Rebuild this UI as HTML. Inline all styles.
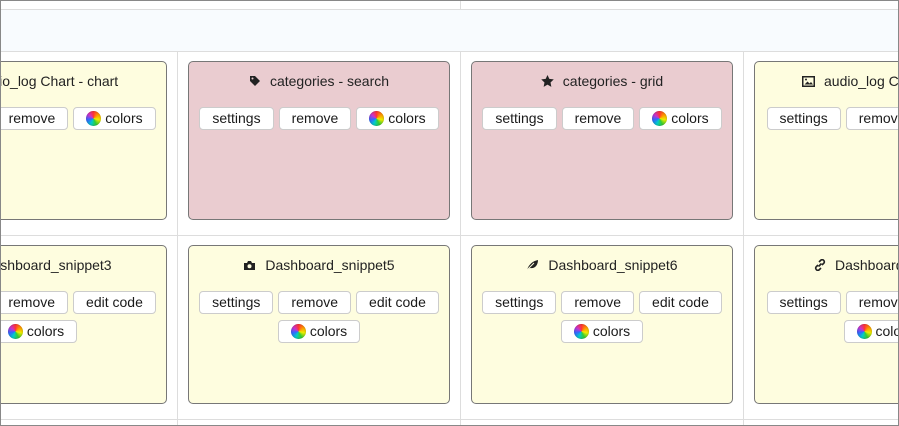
<!DOCTYPE html>
<html><head><style>
*{box-sizing:border-box;margin:0;padding:0}
html{overflow:hidden}
body{width:899px;height:426px;overflow:hidden;background:#fff;font-family:"Liberation Sans",Arial,sans-serif;font-size:14px;color:#222;position:relative}
.frame{position:absolute;left:0;top:0;width:899px;height:426px;border:1px solid #888;pointer-events:none;z-index:10}
.band{position:absolute;left:0;top:9px;width:899px;height:43px;background:#f8fbfe;border-top:1px solid #ddd;border-bottom:1px solid #ddd}
.vl{position:absolute;width:1px;background:#ddd}
.hl{position:absolute;height:1px;background:#ddd;left:0;width:899px}
.clip{position:absolute;left:0;top:0;width:899px;height:426px;overflow:hidden}
.card{position:absolute;width:262px;height:159px;border:1px solid #777;border-radius:5px;background:#fefddf}
.card.pink{background:#eaccd0}
.title{position:absolute;top:11px;left:0;right:0;text-align:center;font-size:14px;line-height:16px;white-space:nowrap}
.title svg{vertical-align:-1px;margin-right:9px}
.row{position:absolute;left:0;right:0;text-align:center;white-space:nowrap;font-size:0}
.b{display:inline-block;height:23px;line-height:21px;border:1px solid #ccc;border-radius:4px;background:#fff;font-size:14px;padding:0 12px;margin:0 2.5px;vertical-align:top;color:#1a1a1a}
.c{display:inline-block;width:15px;height:15px;border-radius:50%;background:conic-gradient(#f33,#f90,#ee0,#3c3,#0cc,#36f,#c3c,#f33);vertical-align:-3px;margin-right:4px;box-shadow:inset 0 0 2px rgba(0,0,0,.3)}
</style></head><body>
<div class="clip">
<div class="band"></div>
<div class="vl" style="left:460px;top:0;height:9px"></div>
<div class="vl" style="left:177px;top:52px;height:374px"></div>
<div class="vl" style="left:460px;top:52px;height:374px"></div>
<div class="vl" style="left:743px;top:52px;height:374px"></div>
<div class="hl" style="top:235px"></div>
<div class="hl" style="top:419px"></div>

<div class="card" style="left:-95px;top:61px">
<div class="title"><svg width="13" height="11" viewBox="0 0 13 11"><rect x=".75" y=".75" width="11.5" height="9.5" fill="none" stroke="#222" stroke-width="1.5"/></svg>audio_log Chart - chart</div>
<div class="row" style="top:45px"><span class="b">settings</span><span class="b">remove</span><span class="b"><i class="c"></i>colors</span></div>
</div>
<div class="card pink" style="left:188px;top:61px">
<div class="title"><svg width="12" height="12" viewBox="0 0 12 12"><path d="M1 1h5l5 5-5 5-5-5z" fill="#222"/><circle cx="3.5" cy="3.5" r="1" fill="#eaccd0"/></svg>categories - search</div>
<div class="row" style="top:45px"><span class="b">settings</span><span class="b">remove</span><span class="b"><i class="c"></i>colors</span></div>
</div>
<div class="card pink" style="left:471px;top:61px">
<div class="title"><svg width="13" height="12" viewBox="0 0 24 23"><path d="M12 0l3.5 7.5 8.5 1-6.2 5.8 1.6 8.4L12 18.5 4.6 22.7l1.6-8.4L0 8.5l8.5-1z" fill="#222"/></svg>categories - grid</div>
<div class="row" style="top:45px"><span class="b">settings</span><span class="b">remove</span><span class="b"><i class="c"></i>colors</span></div>
</div>
<div class="card" style="left:754px;top:61px">
<div class="title" style="left:0;right:auto;padding-left:47px"><svg width="13" height="11" viewBox="0 0 13 11"><rect x=".75" y=".75" width="11.5" height="9.5" fill="none" stroke="#222" stroke-width="1.5"/><path d="M2.5 8.5l3-3 2 2 1.5-1.5 2 2.5z" fill="#222"/><circle cx="4" cy="3.5" r="1" fill="#222"/></svg>audio_log Chart - chart</div>
<div class="row" style="top:45px;left:0;right:auto;padding-left:9px"><span class="b">settings</span><span class="b">remove</span><span class="b"><i class="c"></i>colors</span></div>
</div>

<div class="card" style="left:-95px;top:245px">
<div class="title"><svg width="13" height="11" viewBox="0 0 13 11"><rect width="13" height="11" fill="#222"/></svg>Dashboard_snippet3</div>
<div class="row" style="top:45px"><span class="b">settings</span><span class="b">remove</span><span class="b">edit code</span></div>
<div class="row" style="top:74px"><span class="b"><i class="c"></i>colors</span></div>
</div>
<div class="card" style="left:188px;top:245px">
<div class="title"><svg width="13" height="11" viewBox="0 0 13 11"><path d="M1 3h3l1-2h3l1 2h3v7H1z" fill="#222"/><circle cx="6.5" cy="6.3" r="2" fill="#fefddf"/></svg>Dashboard_snippet5</div>
<div class="row" style="top:45px"><span class="b">settings</span><span class="b">remove</span><span class="b">edit code</span></div>
<div class="row" style="top:74px"><span class="b"><i class="c"></i>colors</span></div>
</div>
<div class="card" style="left:471px;top:245px">
<div class="title"><svg width="13" height="12" viewBox="0 0 13 12"><path d="M1 11C3 5 7 2 12 1c0 5-3 9-8 8z" fill="#222"/><path d="M1 11L8 4" stroke="#fefddf" stroke-width="1"/></svg>Dashboard_snippet6</div>
<div class="row" style="top:45px"><span class="b">settings</span><span class="b">remove</span><span class="b">edit code</span></div>
<div class="row" style="top:74px"><span class="b"><i class="c"></i>colors</span></div>
</div>
<div class="card" style="left:754px;top:245px">
<div class="title" style="left:0;right:auto;padding-left:59px"><svg width="12" height="12" viewBox="0 0 12 12"><path d="M5 3l2-2a2.2 2.2 0 013 3L8 6M7 9l-2 2a2.2 2.2 0 01-3-3l2-2M4.5 7.5l3-3" fill="none" stroke="#222" stroke-width="1.6"/></svg>Dashboard_snippet7</div>
<div class="row" style="top:45px;left:0;right:auto;padding-left:9px"><span class="b">settings</span><span class="b">remove</span><span class="b">edit code</span></div>
<div class="row" style="top:74px;left:0;right:auto;padding-left:86px"><span class="b"><i class="c"></i>colors</span></div>
</div>
</div>
<div class="frame"></div>
</body></html>
